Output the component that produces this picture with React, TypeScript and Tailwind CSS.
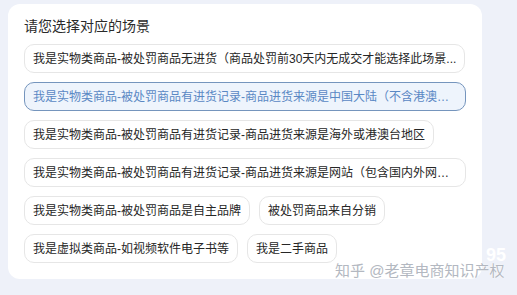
import React from 'react';

interface Scene {
  label: string;
  active?: boolean;
}

const scenes: Scene[] = [
  { label: '我是实物类商品-被处罚商品无进货（商品处罚前30天内无成交才能选择此场景...' },
  { label: '我是实物类商品-被处罚商品有进货记录-商品进货来源是中国大陆（不含港澳台地区）', active: true },
  { label: '我是实物类商品-被处罚商品有进货记录-商品进货来源是海外或港澳台地区' },
  { label: '我是实物类商品-被处罚商品有进货记录-商品进货来源是网站（包含国内外网站）' },
  { label: '我是实物类商品-被处罚商品是自主品牌' },
  { label: '被处罚商品来自分销' },
  { label: '我是虚拟类商品-如视频软件电子书等' },
  { label: '我是二手商品' },
];

export default function App() {
  return (
    <div
      className="relative w-[517px] h-[295px] overflow-hidden bg-[#eef1f9] pl-2 pt-1"
      style={{ fontFamily: '"Liberation Sans", "Noto Sans CJK SC", sans-serif' }}
    >
      {/* Card */}
      <div className="w-[474px] rounded-xl bg-white px-4 pt-3 pb-4">
        <h2 className="text-[14px] leading-5 text-[#2a2a2a] mb-2">请您选择对应的场景</h2>
        <div className="flex flex-wrap gap-[9px]">
          {scenes.map((scene, index) => (
            <div
              key={index}
              className={`h-[29px] max-w-full flex items-center px-2 rounded-[10px] border text-[12px] ${
                scene.active
                  ? 'bg-[#eef4fc] border-[#7595bd] text-[#5a88c4]'
                  : 'bg-white border-[#e6e6e6] text-[#262626]'
              }`}
            >
              <span className="truncate whitespace-nowrap">{scene.label}</span>
            </div>
          ))}
        </div>
      </div>

      {/* Watermark */}
      <div className="absolute left-[486px] top-[246px] text-[18px] font-bold text-white leading-none">95</div>
      <div
        className="absolute left-[335px] top-[262px] text-[15px] leading-[18px] text-[#b3b8c1] whitespace-nowrap"
        style={{ textShadow: '0 0 2px #fff, 0 0 1px #fff' }}
      >
        知乎 @老章电商知识产权
      </div>
    </div>
  );
}
